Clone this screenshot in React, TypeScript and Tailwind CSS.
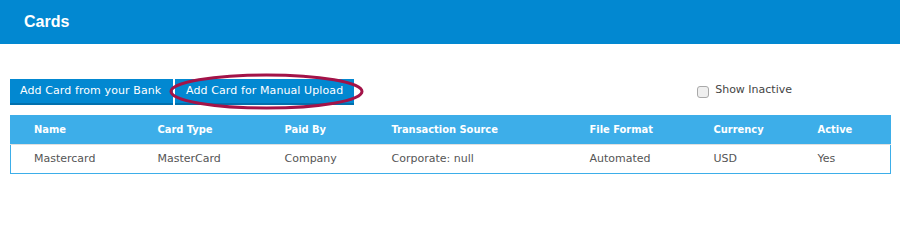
import React from 'react';

const font = { fontFamily: '"DejaVu Sans", Verdana, sans-serif' };

const columns = [
  { key: 'name', label: 'Name', width: 'w-[124px]' },
  { key: 'type', label: 'Card Type', width: 'w-[127px]' },
  { key: 'paidBy', label: 'Paid By', width: 'w-[107px]' },
  { key: 'source', label: 'Transaction Source', width: 'w-[198px]' },
  { key: 'format', label: 'File Format', width: 'w-[124px]' },
  { key: 'currency', label: 'Currency', width: 'w-[104px]' },
  { key: 'active', label: 'Active', width: 'w-[96px]' },
];

const cards = [
  {
    id: 1,
    name: 'Mastercard',
    type: 'MasterCard',
    paidBy: 'Company',
    source: 'Corporate: null',
    format: 'Automated',
    currency: 'USD',
    active: 'Yes',
  },
];

const App: React.FC = () => {
  return (
    <div className="w-[900px] h-[203px] bg-white overflow-hidden">
      <div className="h-[44px] bg-[#0288d1] flex items-center px-[24px]">
        <h1 className="text-white font-bold text-[16px] font-['Liberation_Sans',Arial,sans-serif]">
          Cards
        </h1>
      </div>

      <div className="px-[10px]" style={font}>
        <div className="flex items-center h-[26px] mt-[35px]">
          <button className="block h-[26px] w-[163px] px-[10px] text-left bg-[#0288d1] border-b-2 border-[#0270ad] text-white text-[11px] tracking-[0.1px]">
            Add Card from your Bank
          </button>
          <div className="relative flex ml-[2px]">
            <button className="block h-[26px] px-[11px] bg-[#0288d1] border-b-2 border-[#0270ad] text-white text-[11px] tracking-[0.1px]">
              Add Card for Manual Upload
            </button>
            {/* highlight drawn over the button */}
            <svg
              className="absolute left-[-6px] top-[-6px] pointer-events-none"
              width="195"
              height="37"
              viewBox="0 0 195 37"
            >
              <ellipse
                cx="97.5"
                cy="18.5"
                rx="95.5"
                ry="16.5"
                fill="none"
                stroke="#a31348"
                strokeWidth="3"
              />
            </svg>
          </div>

          <label className="ml-auto mr-[98px] mb-[4px] flex items-center gap-[6px] text-[11px] text-[#444]">
            <span className="w-[12px] h-[12px] mt-[3px] rounded-[3px] border border-[#a9a9a9] bg-[#efefef]" />
            Show Inactive
          </label>
        </div>

        <table className="mt-[10px] w-[880px] table-fixed border border-[#3daee9] border-collapse text-[11px]">
          <thead>
            <tr className="h-[29px] bg-[#3daee9]">
              {columns.map((col) => (
                <th
                  key={col.key}
                  className={`${col.width} pl-[23px] text-left font-bold text-white font-['DejaVu_Sans_Condensed','DejaVu_Sans',sans-serif]`}
                >
                  {col.label}
                </th>
              ))}
            </tr>
          </thead>
          <tbody>
            {cards.map((card) => (
              <tr key={card.id} className="h-[29px] border-t border-[#e0e0e0]">
                {columns.map((col) => (
                  <td key={col.key} className="pl-[23px] text-[#555]">
                    {card[col.key as keyof typeof card]}
                  </td>
                ))}
              </tr>
            ))}
          </tbody>
        </table>
      </div>
    </div>
  );
};

export default App;
